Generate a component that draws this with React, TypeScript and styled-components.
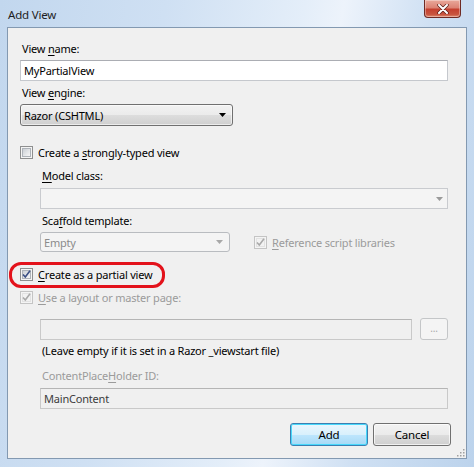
import React from "react";
import styled, { createGlobalStyle } from "styled-components";

const Global = createGlobalStyle`
  html, body { margin: 0; padding: 0; }
  body { font-family: "Noto Sans", "Open Sans", sans-serif; font-size: 11px; letter-spacing: -0.2px; color: #000; }
  u { text-decoration: underline; text-underline-offset: 2px; }
`;

const Window = styled.div`
  position: relative;
  width: 474px;
  height: 467px;
  box-sizing: border-box;
  display: flex;
  flex-direction: column;
  background: linear-gradient(100deg, #c2d7ee 0%, #cfe0f3 30%, #e4eef9 55%, #edf3fb 62%, #cfe0f3 78%, #bcd3ec 100%);
  overflow: hidden;
`;

const TitleBar = styled.div`
  height: 27px;
  flex: 0 0 27px;
  display: flex;
  justify-content: space-between;
  align-items: flex-start;
  padding-left: 8px;
  padding-right: 13px;
`;

const Title = styled.div`
  align-self: center;
  color: #1e1e1e;
  font-size: 11.5px;
  line-height: 15px;
  margin-top: 1px;
`;

const CloseButton = styled.div`
  width: 37px;
  height: 18px;
  box-sizing: border-box;
  border: 1px solid #6e2a24;
  border-top: none;
  border-radius: 0 0 4px 4px;
  background: linear-gradient(180deg, #e9a99b 0%, #dc8374 45%, #c5402f 55%, #c8553f 85%, #e08a6f 100%);
  display: flex;
  align-items: center;
  justify-content: center;
  box-shadow: inset 0 0 0 1px rgba(255, 255, 255, 0.35);
`;

const Client = styled.div`
  position: relative;
  flex: 1;
  margin: 0 7px 8px 7px;
  border: 1px solid #8399b1;
  background: #f0f0f0;
  padding: 13px 18px 0 12px;
  display: flex;
  flex-direction: column;
`;

const Label = styled.div<{ $mt?: number; $disabled?: boolean }>`
  line-height: 15px;
  height: 15px;
  margin-top: ${(p) => p.$mt ?? 0}px;
  padding-left: 2px;
  color: ${(p) => (p.$disabled ? "#9b9b9b" : "#000")};
  white-space: nowrap;
`;

const TextBox = styled.div<{ $mt?: number; $disabled?: boolean; $width?: string }>`
  box-sizing: border-box;
  height: 21px;
  margin-top: ${(p) => p.$mt ?? 0}px;
  ${(p) => (p.$width ? `width: ${p.$width};` : "")}
  border: 1px solid ${(p) => (p.$disabled ? "#c9c9c9" : "#c5c8cd")};
  border-top-color: ${(p) => (p.$disabled ? "#b5b5b5" : "#abadb3")};
  background: ${(p) => (p.$disabled ? "#f0f0f0" : "#fff")};
  display: flex;
  align-items: center;
  padding-left: 3px;
  color: ${(p) => (p.$disabled ? "#3c3c3c" : "#000")};
  white-space: nowrap;
`;

const Combo = styled.div<{ $mt?: number; $width: number; $height: number; $disabled?: boolean }>`
  box-sizing: border-box;
  width: ${(p) => p.$width}px;
  height: ${(p) => p.$height}px;
  margin-top: ${(p) => p.$mt ?? 0}px;
  border: 1px solid ${(p) => (p.$disabled ? "#b9bcc0" : "#707070")};
  border-radius: 3px;
  background: ${(p) =>
    p.$disabled
      ? "#f4f4f4"
      : "linear-gradient(180deg, #f2f2f2 0%, #ebebeb 50%, #dddddd 51%, #cfcfcf 100%)"};
  box-shadow: inset 0 0 0 1px ${(p) => (p.$disabled ? "#f4f4f4" : "rgba(255,255,255,0.6)")};
  display: flex;
  align-items: center;
  justify-content: space-between;
  padding: 0 6px 0 3px;
  color: ${(p) => (p.$disabled ? "#8b8b8b" : "#000")};
`;

const EditCombo = styled.div<{ $mt?: number }>`
  box-sizing: border-box;
  height: 21px;
  margin-top: ${(p) => p.$mt ?? 0}px;
  border: 1px solid #c9cbcf;
  background: #f4f4f4;
  display: flex;
  align-items: center;
  justify-content: flex-end;
  padding-right: 4px;
`;

const CheckRow = styled.div<{ $mt?: number; $disabled?: boolean }>`
  position: relative;
  display: flex;
  align-items: center;
  gap: 5px;
  height: 16px;
  margin-top: ${(p) => p.$mt ?? 0}px;
  color: ${(p) => (p.$disabled ? "#9b9b9b" : "#000")};
  white-space: nowrap;
`;

const Box = styled.div<{ $disabled?: boolean }>`
  box-sizing: border-box;
  width: 13px;
  height: 13px;
  flex: 0 0 13px;
  border: 1px solid ${(p) => (p.$disabled ? "#c4c4c4" : "#8e8f8f")};
  background: #f4f4f4;
  padding: 1px;
  display: flex;
`;

const BoxInner = styled.div<{ $disabled?: boolean }>`
  flex: 1;
  position: relative;
  border: 1px solid ${(p) => (p.$disabled ? "#e2e2e2" : "#aeb3b9")};
  background: ${(p) =>
    p.$disabled ? "#f2f2f2" : "linear-gradient(135deg, #cbcfd5 0%, #e6e8ea 60%, #f6f6f6 100%)"};
`;

const CheckMark = styled.svg`
  position: absolute;
  left: -2px;
  top: -2px;
`;

const Indent = styled.div`
  display: flex;
  flex-direction: column;
  padding-left: 20px;
`;

const Row = styled.div<{ $mt?: number; $gap: number }>`
  display: flex;
  align-items: center;
  gap: ${(p) => p.$gap}px;
  margin-top: ${(p) => p.$mt ?? 0}px;
`;

const Highlight = styled.div`
  position: absolute;
  left: -11px;
  top: -4px;
  width: 156px;
  height: 26px;
  box-sizing: border-box;
  border: 3px solid #e3121b;
  border-radius: 12px;
  pointer-events: none;
`;

const BrowseButton = styled.div`
  box-sizing: border-box;
  width: 28px;
  height: 22px;
  border: 1px solid #c4c6c8;
  border-radius: 3px;
  background: #f4f4f4;
  color: #a8a8a8;
  display: flex;
  align-items: center;
  justify-content: center;
  font-size: 10px;
  line-height: 10px;
  padding-bottom: 2px;
`;

const Note = styled.div<{ $mt?: number }>`
  line-height: 15px;
  margin-top: ${(p) => p.$mt ?? 0}px;
  padding-left: 2px;
  white-space: nowrap;
`;

const ButtonRow = styled.div<{ $mt?: number }>`
  display: flex;
  justify-content: flex-end;
  gap: 5px;
  margin-top: ${(p) => p.$mt ?? 0}px;
  margin-right: -3px;
`;

const Button = styled.div<{ $default?: boolean }>`
  box-sizing: border-box;
  width: 78px;
  height: 23px;
  border: 1px solid ${(p) => (p.$default ? "#3c7fb1" : "#707070")};
  border-radius: 3px;
  background: ${(p) =>
    p.$default
      ? "linear-gradient(180deg, #eaf6fd 0%, #d9f0fc 50%, #bee6fd 51%, #a7d9f5 100%)"
      : "linear-gradient(180deg, #f2f2f2 0%, #ebebeb 50%, #dddddd 51%, #cfcfcf 100%)"};
  box-shadow: inset 0 0 0 1px ${(p) => (p.$default ? "#48d8fb" : "rgba(255,255,255,0.7)")};
  display: flex;
  align-items: center;
  justify-content: center;
  color: #000;
  font-size: 11.5px;
`;

const Grip = styled.svg`
  position: absolute;
  right: 1px;
  bottom: 1px;
`;

const Arrow = ({ color }: { color: string }) => (
  <svg width="7" height="4" viewBox="0 0 7 4">
    <path d="M0 0 L7 0 L3.5 4 Z" fill={color} />
  </svg>
);

const CheckBox = ({ checked, disabled }: { checked?: boolean; disabled?: boolean }) => (
  <Box $disabled={disabled}>
    <BoxInner $disabled={disabled}>
      {checked && (
        <CheckMark width="11" height="11" viewBox="0 0 11 11">
          <path
            d="M2 5.5 L4.3 8 L9 1.8"
            fill="none"
            stroke={disabled ? "#a9a9a9" : "#3b4f84"}
            strokeWidth="1.6"
          />
        </CheckMark>
      )}
    </BoxInner>
  </Box>
);

export default function App() {
  return (
    <>
      <Global />
      <Window>
        <TitleBar>
          <Title>Add View</Title>
          <CloseButton>
            <svg width="12" height="10" viewBox="0 0 12 10">
              <path d="M2 1 L10 9 M10 1 L2 9" stroke="#5a1d17" strokeWidth="3.4" strokeLinecap="round" />
              <path d="M2 1 L10 9 M10 1 L2 9" stroke="#ffffff" strokeWidth="2" strokeLinecap="round" />
            </svg>
          </CloseButton>
        </TitleBar>
        <Client>
          <Label>
            View <u>n</u>ame:
          </Label>
          <TextBox $mt={4}>MyPartialView</TextBox>
          <Label $mt={4}>
            View <u>e</u>ngine:
          </Label>
          <Combo $mt={4} $width={213} $height={22}>
            <span>Razor (CSHTML)</span>
            <Arrow color="#000" />
          </Combo>
          <CheckRow $mt={18}>
            <CheckBox />
            <span>
              Create a <u>s</u>trongly-typed view
            </span>
          </CheckRow>
          <Indent>
            <Label $mt={8}>
              <u>M</u>odel class:
            </Label>
            <EditCombo $mt={5}>
              <Arrow color="#9a9a9a" />
            </EditCombo>
            <Label $mt={4}>
              Sca<u>f</u>fold template:
            </Label>
            <Row $mt={4} $gap={24}>
              <Combo $width={190} $height={20} $disabled>
                <span>Empty</span>
                <Arrow color="#a8a8a8" />
              </Combo>
              <CheckRow $disabled>
                <CheckBox checked disabled />
                <span>
                  <u>R</u>eference script libraries
                </span>
              </CheckRow>
            </Row>
          </Indent>
          <CheckRow $mt={14}>
            <CheckBox checked />
            <span>
              <u>C</u>reate as a partial view
            </span>
            <Highlight />
          </CheckRow>
          <CheckRow $mt={7} $disabled>
            <CheckBox checked disabled />
            <span>
              <u>U</u>se a layout or master page:
            </span>
          </CheckRow>
          <Indent>
            <Row $mt={13} $gap={8}>
              <TextBox $disabled $width="372px" />
              <BrowseButton>...</BrowseButton>
            </Row>
            <Note $mt={3}>(Leave empty if it is set in a Razor _viewstart file)</Note>
            <Label $mt={10} $disabled>
              ContentPlace<u>H</u>older ID:
            </Label>
            <TextBox $mt={5} $disabled>
              MainContent
            </TextBox>
          </Indent>
          <ButtonRow $mt={14}>
            <Button $default>Add</Button>
            <Button>Cancel</Button>
          </ButtonRow>
          <Grip width="10" height="10" viewBox="0 0 10 10">
            {[
              [8, 2],
              [8, 5],
              [5, 5],
              [8, 8],
              [5, 8],
              [2, 8],
            ].map(([x, y], i) => (
              <rect key={i} x={x} y={y} width="1.5" height="1.5" fill="#a0a0a0" />
            ))}
          </Grip>
        </Client>
      </Window>
    </>
  );
}
